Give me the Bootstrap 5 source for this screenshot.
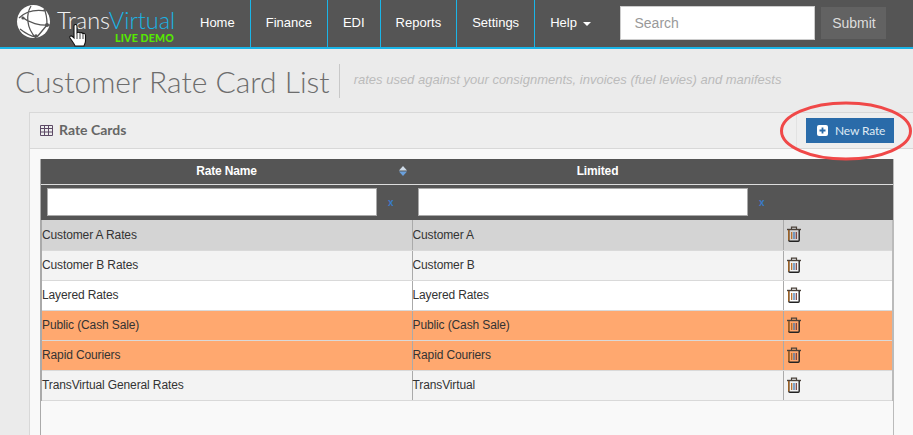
<!DOCTYPE html>
<html lang="en"><head><meta charset="utf-8"><title>Customer Rate Card List</title>
<link href="https://cdn.jsdelivr.net/npm/bootstrap@5.3.0/dist/css/bootstrap.min.css" rel="stylesheet">
<style>
html,body{height:435px;overflow:hidden}
body{background:#ebebeb;font-family:"Liberation Sans",Arial,sans-serif;font-size:12px;color:#333;width:913px;position:relative}
.tv-top{height:49px;background:#555;border-bottom:2px solid #1ab5e8;padding:0}
.tv-brand{width:185px;height:47px;position:relative;flex:none}
.tv-globe{position:absolute;left:16px;top:4px}
.tv-word{position:absolute;left:57px;top:9px;font:300 23.5px/23px Lato,sans-serif;color:#f2f2f2;white-space:nowrap}
.tv-word span{color:#19b4e6}
.tv-live{position:absolute;left:115px;top:33px;font:900 10.5px/10px Lato,sans-serif;color:#55e800;letter-spacing:.2px;white-space:nowrap}
.tv-hand{position:absolute;left:69px;top:24px}
.tv-nav a{display:block;height:47px;line-height:46px;padding:0 15px;color:#fff;font-size:13px;text-decoration:none;border-right:1px solid #1ab5e8;white-space:nowrap}
.tv-nav .nav-item:last-child a{border-right:0}
.tv-caret{display:inline-block;width:0;height:0;margin-left:3px;vertical-align:middle;border-top:4px solid #fff;border-left:4px solid transparent;border-right:4px solid transparent}
.tv-search{width:195px;height:34px;margin-left:14px;border:1px solid #ccc;border-radius:0;font-size:14px;padding:0 13px;color:#999;flex:none}
.tv-search::placeholder{color:#999}
.tv-submit{width:65px;height:32px;margin-left:6px;background:#626262;color:#ddd;border:0;border-radius:0;font-size:14px;padding:0;flex:none}
.tv-form{height:46px;flex:none}
.tv-head{height:63px;padding:1px 0 0 15px}
.tv-h1{font:300 30px/34px Lato,sans-serif;color:#6d6d6d;margin:0;padding-right:9px;border-right:1px solid #c8c8c8;height:34px;white-space:nowrap}
.tv-sub{font-style:italic;font-size:13px;color:#bbb;margin:0 0 2px 14px;white-space:nowrap}
.tv-panel{margin-left:29px;width:900px;border:1px solid #d8d8d8;border-right:0;background:#f9f9f9;height:340px;border-radius:0}
.tv-phead{height:36px;background:#eee;border-bottom:1px solid #d8d8d8;padding:0 0 1px 10px;position:relative}
.tv-ptitle{font:700 14px/1 Lato,sans-serif;color:#666;margin-left:6px}
.tv-new{position:absolute;left:776px;top:5px;width:88px;height:25px;background:#2a6ba9;color:#dfe9f3;border:0;border-radius:0;font:400 12px/1 Lato,sans-serif;letter-spacing:-.15px;padding:0 0 0 11px;display:flex;align-items:center;gap:7px}
.tv-vline{position:absolute;left:766px;top:0;bottom:0;width:1px;background:#e2e2e2}
.tv-wrap{margin:10px 0 0 10px;width:854px;height:276px;border-left:1px solid #aaa;border-right:1px solid #bbb}
.tv-table{width:854px;table-layout:fixed;margin:0 0 0 -1px;border-collapse:collapse;--bs-table-bg:transparent}
.tv-table th{background:#555;color:#fff;font-size:12px;font-weight:700;letter-spacing:-.15px;text-align:center;vertical-align:middle;height:25px;padding:0;border:0;border-bottom:1px solid #ddd;position:relative}
.tv-table .tv-filter td{background:#555;height:36px;padding:0;border:0;white-space:nowrap;vertical-align:middle}
.tv-fin{display:inline-block;vertical-align:middle;width:330px;height:28px;margin-left:6px;background:#fff;border:1px solid #aaa;border-radius:0;padding:0 4px}
.tv-x{color:#3a7bc8;font-size:10px;font-weight:700;margin-left:11px;vertical-align:middle}
.tv-table tbody tr.tv-row td{height:30px;padding:0;font-size:12px;letter-spacing:-.12px;color:#333;border:0;border-bottom:1px solid #d9d9d9;border-right:1px solid #aaa;vertical-align:middle;line-height:1}
.tv-table tr.tv-row td:first-child{border-left:2px solid #aaa}
.tv-table tr.tv-row td:last-child{border-right:2px solid #bbb;padding-left:3px}
.tv-bin{display:block;margin-bottom:1px}
.tv-g td{background:#d4d4d4!important}.tv-l td{background:#f3f3f3!important}.tv-w td{background:#fff!important}.tv-o td{background:#ffa86f!important}
.tv-sort{position:absolute;left:358px;top:7px}
.tv-ring{position:absolute;left:779px;top:100px}
</style></head><body>
<nav class="navbar navbar-expand tv-top d-flex flex-nowrap justify-content-start align-items-start">
<div class="tv-brand">
<svg class="tv-globe" width="35" height="35" viewBox="0 0 35 35"><circle cx="17.500" cy="17.500" r="16.500" fill="#fff"/><g stroke="#555" stroke-width="1.300" fill="none"><path d="M3 14C9 8 18 5 30 7M15 2C10 10 10 24 20 34M6 13C13 19 24 22 34 21M28 5C31 10 31 16 31 21M31 21L21 33M4 25C9 29 14 32 20 33"/></g><circle cx="31" cy="21" r="2" fill="#555"/><circle cx="7" cy="14" r="1.600" fill="#555"/><circle cx="20" cy="32" r="1.800" fill="#555"/></svg>
<div class="tv-word">Trans<span>Virtual</span></div>
<div class="tv-live">LIVE DEMO</div>
<svg class="tv-hand" width="18" height="24" viewBox="0 0 18 24"><path d="M5 2c0-2 3-2 3 0v7c1-1 2-1 3 0 1-.6 2-.4 3 .5 1-.3 2.500 0 2.500 2V17c0 2-1 3-1.500 5H6c-.5-2-3-5-5-8-.8-1.500.8-3 2.500-1.500L5 14z" fill="#fff" stroke="#111" stroke-width="1.100"/><path d="M8 10v5M11 10v5M14 10v5" stroke="#111" stroke-width=".8"/></svg>
</div>
<ul class="navbar-nav tv-nav flex-row flex-nowrap flex-shrink-0">
<li class="nav-item"><a href="#">Home</a></li>
<li class="nav-item"><a href="#">Finance</a></li>
<li class="nav-item"><a href="#">EDI</a></li>
<li class="nav-item"><a href="#">Reports</a></li>
<li class="nav-item"><a href="#">Settings</a></li>
<li class="nav-item"><a href="#">Help <span class="tv-caret"></span></a></li>
</ul>
<form class="d-flex align-items-center flex-nowrap tv-form"><input class="form-control tv-search" placeholder="Search"><button type="button" class="btn tv-submit">Submit</button></form>
</nav>
<div class="tv-head d-flex align-items-center">
<h1 class="tv-h1">Customer Rate Card List</h1><span class="tv-sub">rates used against your consignments, invoices (fuel levies) and manifests</span>
</div>
<div class="card tv-panel">
<div class="tv-phead d-flex align-items-center">
<svg width="13" height="11" viewBox="0 0 13 11"><path d="M.5.5h12v10H.5zM.5 3.500h12M.5 7h12M4.500 .5v10M8.500 .5v10" fill="none" stroke="#5d4a66" stroke-width="1"/></svg>
<span class="tv-ptitle">Rate Cards</span><span class="tv-vline"></span>
<button class="btn tv-new"><svg width="11" height="11" viewBox="0 0 11 11"><rect width="11" height="11" rx="2" fill="#fff"/><path d="M5.500 2.500v6M2.500 5.500h6" stroke="#2a6ba9" stroke-width="1.800"/></svg>New Rate</button>
</div>
<div class="tv-wrap">
<table class="table tv-table">
<colgroup><col style="width:371px"><col style="width:371px"><col></colgroup>
<thead><tr><th>Rate Name<svg class="tv-sort" width="8" height="10" viewBox="0 0 8 10"><path d="M4 0L8 4.500H0z" fill="#cfdbe8"/><path d="M4 10L8 5.500H0z" fill="#6aa0dc"/></svg></th><th>Limited</th><th></th></tr></thead>
<tbody>
<tr class="tv-filter"><td><input class="tv-fin"><span class="tv-x">x</span></td><td><input class="tv-fin"><span class="tv-x">x</span></td><td></td></tr>
<tr class="tv-row tv-g"><td>Customer A Rates</td><td>Customer A</td><td><svg class="tv-bin" width="14" height="16" viewBox="0 0 14 16"><use href="#tvbin"/></svg></td></tr>
<tr class="tv-row tv-l"><td>Customer B Rates</td><td>Customer B</td><td><svg class="tv-bin" width="14" height="16" viewBox="0 0 14 16"><use href="#tvbin"/></svg></td></tr>
<tr class="tv-row tv-w"><td>Layered Rates</td><td>Layered Rates</td><td><svg class="tv-bin" width="14" height="16" viewBox="0 0 14 16"><use href="#tvbin"/></svg></td></tr>
<tr class="tv-row tv-o"><td>Public (Cash Sale)</td><td>Public (Cash Sale)</td><td><svg class="tv-bin" width="14" height="16" viewBox="0 0 14 16"><use href="#tvbin"/></svg></td></tr>
<tr class="tv-row tv-o"><td>Rapid Couriers</td><td>Rapid Couriers</td><td><svg class="tv-bin" width="14" height="16" viewBox="0 0 14 16"><use href="#tvbin"/></svg></td></tr>
<tr class="tv-row tv-l"><td>TransVirtual General Rates</td><td>TransVirtual</td><td><svg class="tv-bin" width="14" height="16" viewBox="0 0 14 16"><use href="#tvbin"/></svg></td></tr>
</tbody></table>
</div>
</div>
<svg width="0" height="0" class="d-block"><symbol id="tvbin" viewBox="0 0 14 16"><path d="M0 3.500h14" stroke="#4a4038" stroke-width="1.400"/><path d="M4.500 3V1.200h5V3" fill="none" stroke="#4a4038" stroke-width="1.200"/><path d="M1.800 4v10.300c0 .6.400 1 1 1h8.400c.6 0 1-.4 1-1V4" fill="none" stroke="#222" stroke-width="1.400"/><path d="M1.800 4v10.300" stroke="#c9761f" stroke-width="1"/><path d="M4.700 6v7" stroke="#b5651d" stroke-width="1.200"/><path d="M7 6v7" stroke="#2f6fb0" stroke-width="1.200"/><path d="M9.300 6v7" stroke="#7a3b3b" stroke-width="1.200"/></symbol></svg>
<svg class="tv-ring" width="134" height="62" viewBox="0 0 134 62"><ellipse cx="67" cy="31" rx="64.500" ry="28" fill="none" stroke="#f04848" stroke-width="3"/></svg>
</body></html>
